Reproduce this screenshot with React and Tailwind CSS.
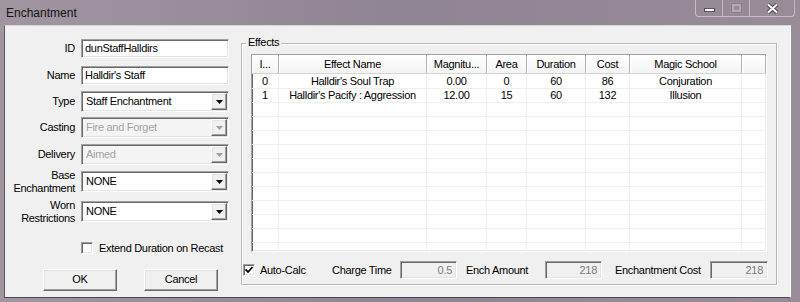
import React from 'react';

const sunken =
    'border border-t-[#a0a0a0] border-l-[#a0a0a0] border-b-white border-r-white shadow-[inset_1px_1px_0_#696969,inset_-1px_-1px_0_#e3e3e3]';
const raised =
    'border border-t-white border-l-white border-b-[#696969] border-r-[#696969] shadow-[inset_-1px_-1px_0_#a0a0a0,inset_1px_1px_0_#e3e3e3]';

const TextBox = ({ value }) => (
    <div className={`w-[148px] h-[19px] bg-white ${sunken} flex items-center px-[3px] whitespace-nowrap`}>
        {value}
    </div>
);

const DropDown = ({ value, disabled }) => (
    <div className={`w-[148px] h-[21px] ${disabled ? 'bg-[#f4f4f4] text-[#a3a3a3]' : 'bg-white'} ${sunken} flex items-center`}>
        <span className="flex-1 pl-[4px] whitespace-nowrap">{value}</span>
        <div className={`w-[16px] h-[17px] mr-[1px] bg-[#f0f0f0] ${raised} flex items-center justify-center`}>
            <svg width="7" height="4" viewBox="0 0 7 4">
                <path d="M0 0h7L3.5 4z" fill={disabled ? '#a0a0a0' : '#000'} />
            </svg>
        </div>
    </div>
);

const Row = ({ label, children, className = '' }) => (
    <div className={`flex items-center ${className}`}>
        <div className="w-[70px] text-right leading-[13px]">{label}</div>
        <div className="ml-[6px]">{children}</div>
    </div>
);

const CheckBox = ({ checked }) => (
    <div className={`w-[12px] h-[12px] bg-white ${sunken} flex items-center justify-center`}>
        {checked && (
            <svg width="8" height="8" viewBox="0 0 8 8">
                <path d="M0.5 3.5L3 6L7.5 1" stroke="#000" strokeWidth="1.8" fill="none" />
            </svg>
        )}
    </div>
);

const ReadOnly = ({ value, w }) => (
    <div className={`${w} h-[18px] bg-[#f0f0f0] ${sunken} flex items-center justify-end pr-[4px] text-[#7a7a7a]`}>
        {value}
    </div>
);

const columns = [
    { name: 'I...', w: 'w-[27px]' },
    { name: 'Effect Name', w: 'w-[148px]' },
    { name: 'Magnitu...', w: 'w-[60px]' },
    { name: 'Area', w: 'w-[40px]' },
    { name: 'Duration', w: 'w-[59px]' },
    { name: 'Cost', w: 'w-[44px]' },
    { name: 'Magic School', w: 'w-[112px]' },
    { name: '', w: 'flex-1' },
];

const effects = [
    ['0', "Halldir's Soul Trap", '0.00', '0', '60', '86', 'Conjuration', ''],
    ['1', "Halldir's Pacify : Aggression", '12.00', '15', '60', '132', 'Illusion', ''],
];

const App = () => {
    const rows = [...effects];
    while (rows.length < 13) rows.push(['', '', '', '', '', '', '', '']);

    return (
        <div
            className="w-[800px] h-[302px] overflow-hidden flex flex-col bg-gradient-to-r from-[#a095a1] via-[#8f8491] to-[#978c98] text-[11px] tracking-[-0.3px] text-black"
            style={{ fontFamily: '"Liberation Sans", Arial, sans-serif' }}
        >
            {/* Title bar */}
            <div className="h-[24px] flex items-start relative shrink-0">
                <div className="pl-[6px] pt-[4px] text-[12px] tracking-normal text-[#151515]">Enchantment</div>
                <div className="absolute top-0 right-[5px] h-[17px] flex border border-t-0 border-[#c5bcc6] rounded-b-[4px] overflow-hidden">
                    <div className="w-[27px] flex items-center justify-center border-r border-[#c5bcc6]">
                        <div className="w-[11px] h-[4px] mt-[3px] bg-white border border-[#5c545d]" />
                    </div>
                    <div className="w-[27px] flex items-center justify-center border-r border-[#c5bcc6]">
                        <div className="w-[9px] h-[8px] border-2 border-[#b2a9b3] shadow-[0_0_0_1px_#8a808b]" />
                    </div>
                    <div className="w-[44px] flex items-center justify-center">
                        <svg width="13" height="11" viewBox="0 0 13 11">
                            <path d="M2 1.5L11 9.5M11 1.5L2 9.5" stroke="#4f4750" strokeWidth="4" />
                            <path d="M2 1.5L11 9.5M11 1.5L2 9.5" stroke="#fff" strokeWidth="2" />
                        </svg>
                    </div>
                </div>
            </div>

            {/* Client area */}
            <div className="h-[273px] ml-[4px] mr-[9px] mt-[1px] flex bg-[#f0f0f0] border border-t-[#d9d4d9] border-l-[#5e5660] border-r-white border-b-[#4e4750]">
                {/* Left panel */}
                <div className="w-[236px] flex flex-col pt-[13px]">
                    <Row label="ID">
                        <TextBox value="dunStaffHalldirs" />
                    </Row>
                    <Row label="Name" className="mt-[8px]">
                        <TextBox value="Halldir's Staff" />
                    </Row>
                    <Row label="Type" className="mt-[6px]">
                        <DropDown value="Staff Enchantment" />
                    </Row>
                    <Row label="Casting" className="mt-[5px]">
                        <DropDown value="Fire and Forget" disabled />
                    </Row>
                    <Row label="Delivery" className="mt-[6px]">
                        <DropDown value="Aimed" disabled />
                    </Row>
                    <Row label={<>Base<br />Enchantment</>} className="mt-[3px] h-[27px]">
                        <DropDown value="NONE" />
                    </Row>
                    <Row label={<>Worn<br />Restrictions</>} className="mt-[3px] h-[27px]">
                        <DropDown value="NONE" />
                    </Row>
                    <div className="flex items-center mt-[15px] ml-[76px]">
                        <CheckBox />
                        <span className="ml-[6px] whitespace-nowrap">Extend Duration on Recast</span>
                    </div>
                    <div className="flex mt-[12px] ml-[38px] gap-[27px]">
                        <div className={`w-[74px] h-[22px] bg-[#f0f0f0] ${raised} flex items-center justify-center`}>OK</div>
                        <div className={`w-[74px] h-[22px] bg-[#f0f0f0] ${raised} flex items-center justify-center`}>Cancel</div>
                    </div>
                </div>

                {/* Effects group */}
                <div className="relative mt-[17px] w-[536px] h-[242px] border border-[#b9b9b9] shadow-[inset_1px_1px_0_#fff,1px_1px_0_#fff] flex flex-col">
                    <span className="absolute -top-[8px] left-[4px] px-[2px] bg-[#f0f0f0] leading-[13px]">Effects</span>

                    {/* List view */}
                    <div className={`ml-[9px] mt-[10px] w-[516px] h-[198px] bg-white ${sunken} overflow-hidden flex flex-col`}>
                        <div className="flex h-[19px] shrink-0 bg-gradient-to-b from-white to-[#f3f3f3] border-b border-[#d5d5d5]">
                            {columns.map((c, i) => (
                                <div
                                    key={i}
                                    className={`${c.w} flex items-center justify-center border-r border-[#b0b0b0] shadow-[inset_1px_0_0_#fff] whitespace-nowrap overflow-hidden`}
                                >
                                    {c.name}
                                </div>
                            ))}
                        </div>
                        <div className="h-[1px] shrink-0" />
                        {rows.map((r, ri) => (
                            <div key={ri} className="flex h-[14px] shrink-0 border-b border-[#efefef]">
                                {r.map((cell, ci) => (
                                    <div
                                        key={ci}
                                        className={`${columns[ci].w} flex items-center justify-center border-r border-[#efefef] whitespace-nowrap overflow-hidden leading-[13px]`}
                                    >
                                        {cell}
                                    </div>
                                ))}
                            </div>
                        ))}
                    </div>

                    {/* Totals row */}
                    <div className="flex items-center mt-[9px] ml-[1px] whitespace-nowrap">
                        <CheckBox checked />
                        <span className="ml-[5px] w-[72px]">Auto-Calc</span>
                        <span className="w-[68px]">Charge Time</span>
                        <ReadOnly value="0.5" w="w-[57px]" />
                        <span className="ml-[9px] w-[79px]">Ench Amount</span>
                        <ReadOnly value="218" w="w-[57px]" />
                        <span className="ml-[13px] w-[95px]">Enchantment Cost</span>
                        <ReadOnly value="218" w="w-[58px]" />
                    </div>
                </div>
            </div>
        </div>
    );
};

export default App;
